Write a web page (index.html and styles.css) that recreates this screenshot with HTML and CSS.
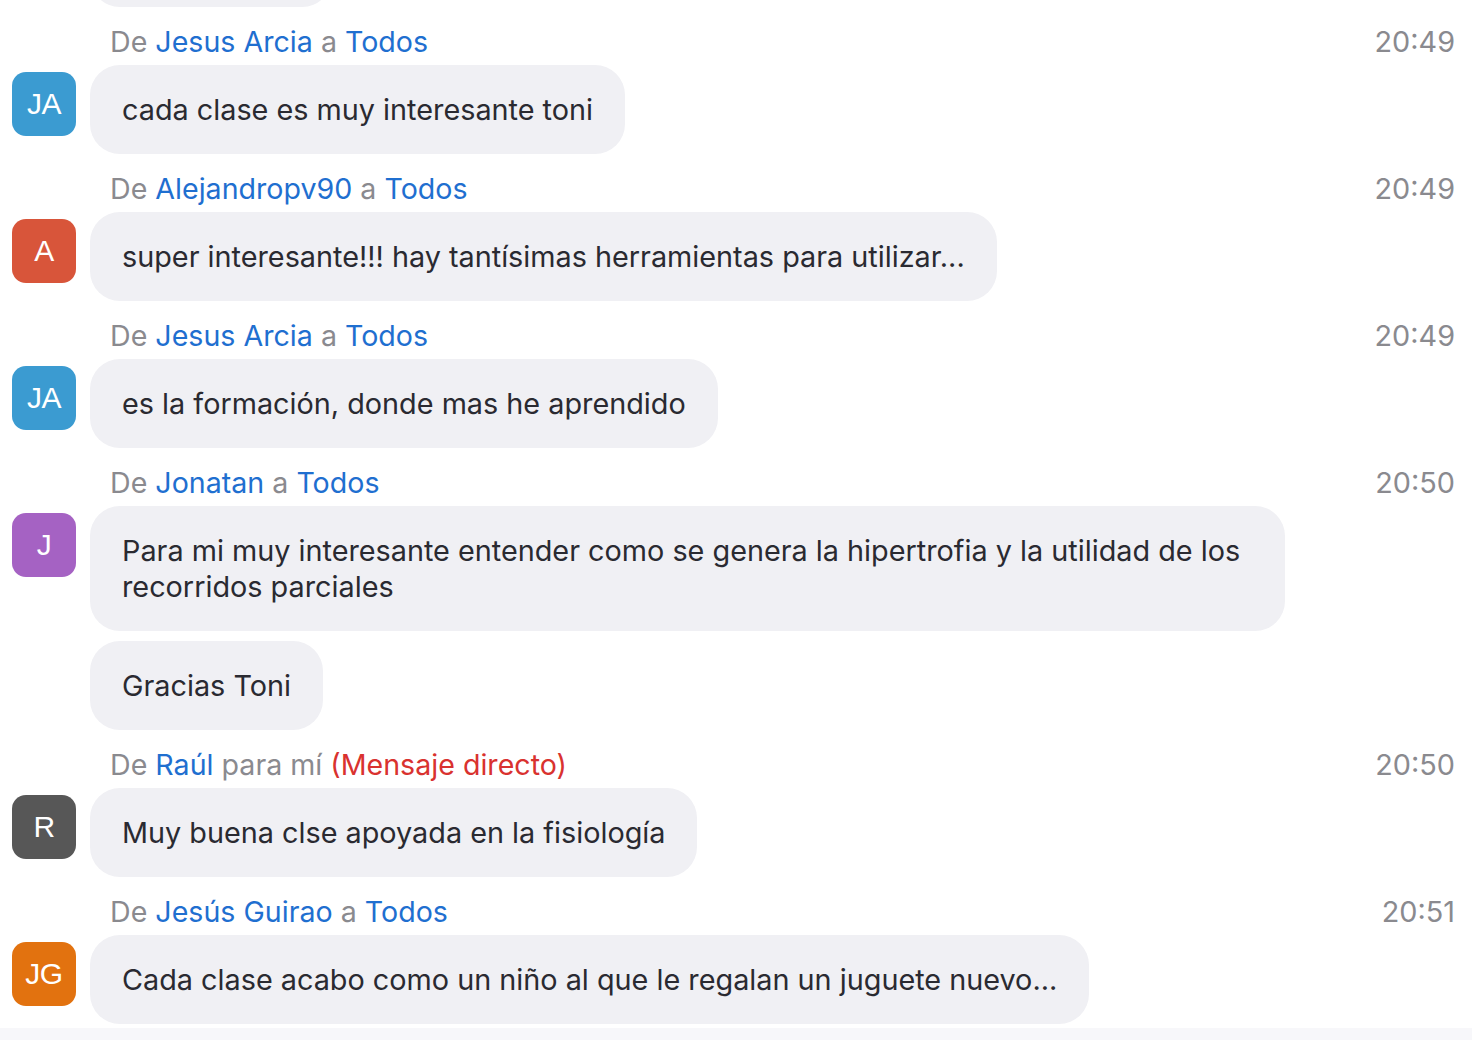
FILE: index.html
```html
<!DOCTYPE html>
<html lang="es">
<head>
<meta charset="utf-8">
<link rel="stylesheet" href="styles.css">
</head>
<body>
<div class="chat">
  <div class="msg-row first">
    <div class="avatar-slot"></div>
    <div class="bubble stub">&nbsp;</div>
  </div>

  <div class="msg">
    <div class="head"><div class="who"><span class="muted">De</span> <span class="name">Jesus Arcia</span> <span class="muted">a</span> <span class="name">Todos</span></div><div class="time">20:49</div></div>
    <div class="msg-row">
      <div class="avatar c-blue">JA</div>
      <div class="bubble">cada clase es muy interesante toni</div>
    </div>
  </div>

  <div class="msg">
    <div class="head"><div class="who"><span class="muted">De</span> <span class="name">Alejandropv90</span> <span class="muted">a</span> <span class="name">Todos</span></div><div class="time">20:49</div></div>
    <div class="msg-row">
      <div class="avatar c-red">A</div>
      <div class="bubble">super interesante!!! hay tantísimas herramientas para utilizar...</div>
    </div>
  </div>

  <div class="msg">
    <div class="head"><div class="who"><span class="muted">De</span> <span class="name">Jesus Arcia</span> <span class="muted">a</span> <span class="name">Todos</span></div><div class="time">20:49</div></div>
    <div class="msg-row">
      <div class="avatar c-blue">JA</div>
      <div class="bubble">es la formación, donde mas he aprendido</div>
    </div>
  </div>

  <div class="msg">
    <div class="head"><div class="who"><span class="muted">De</span> <span class="name">Jonatan</span> <span class="muted">a</span> <span class="name">Todos</span></div><div class="time">20:50</div></div>
    <div class="msg-row">
      <div class="avatar c-purple">J</div>
      <div class="bubble">Para mi muy interesante entender como se genera la hipertrofia y la utilidad de los recorridos parciales</div>
    </div>
    <div class="msg-row cont">
      <div class="avatar-slot"></div>
      <div class="bubble">Gracias Toni</div>
    </div>
  </div>

  <div class="msg">
    <div class="head"><div class="who"><span class="muted">De</span> <span class="name">Raúl</span> <span class="muted">para mí</span> <span class="direct">(Mensaje directo)</span></div><div class="time">20:50</div></div>
    <div class="msg-row">
      <div class="avatar c-gray">R</div>
      <div class="bubble">Muy buena clse apoyada en la fisiología</div>
    </div>
  </div>

  <div class="msg">
    <div class="head"><div class="who"><span class="muted">De</span> <span class="name">Jesús Guirao</span> <span class="muted">a</span> <span class="name">Todos</span></div><div class="time">20:51</div></div>
    <div class="msg-row">
      <div class="avatar c-orange">JG</div>
      <div class="bubble">Cada clase acabo como un niño al que le regalan un juguete nuevo...</div>
    </div>
  </div>
</div>
<div class="composer"></div>
</body>
</html>
```
FILE: styles.css
```css
html, body {
  margin: 0;
  padding: 0;
  background: #ffffff;
  overflow: hidden;
  height: 1040px;
}
body {
  font-family: "Inter", "Noto Sans", sans-serif;
  color: #2b2b33;
}
.chat {
  padding: 0 17px 0 12px;
}
.msg {
  display: flex;
  flex-direction: column;
  margin-top: 18px;
}
.head {
  display: flex;
  justify-content: space-between;
  align-items: center;
  height: 34px;
  padding-left: 98px;
  font-size: 28.6px;
  line-height: 34px;
  margin-bottom: 6px;
}
.muted { color: #8a8a8f; }
.name { color: #1f6fd0; }
.direct { color: #d9322f; }
.time {
  color: #8a8a8f;
  font-size: 28.8px;
}
.msg-row {
  display: flex;
  align-items: flex-start;
  gap: 14px;
}
.msg-row.cont { margin-top: 10px; }
.msg-row.first { margin-top: -82px; }
.avatar, .avatar-slot {
  flex: 0 0 64px;
  width: 64px;
}
.avatar {
  height: 64px;
  margin-top: 7px;
  border-radius: 14px;
  color: #ffffff;
  font-family: "Liberation Sans", "Inter", sans-serif;
  font-size: 30px;
  display: flex;
  align-items: center;
  justify-content: center;
  letter-spacing: -0.5px;
}
.c-blue { background: #3b9bd1; }
.c-red { background: #d8553a; }
.c-purple { background: #a562c3; }
.c-gray { background: #575757; }
.c-orange { background: #e2720f; }
.bubble {
  background: #f0f0f4;
  border-radius: 30px;
  padding: 26.5px 32px;
  font-size: 28.8px;
  line-height: 36px;
  max-width: 1131px;
  color: #2a2a31;
}
.bubble.stub {
  width: 178px;
}
.composer {
  position: absolute;
  left: 0;
  right: 0;
  top: 1028px;
  height: 12px;
  background: #f7f7fa;
}
```
